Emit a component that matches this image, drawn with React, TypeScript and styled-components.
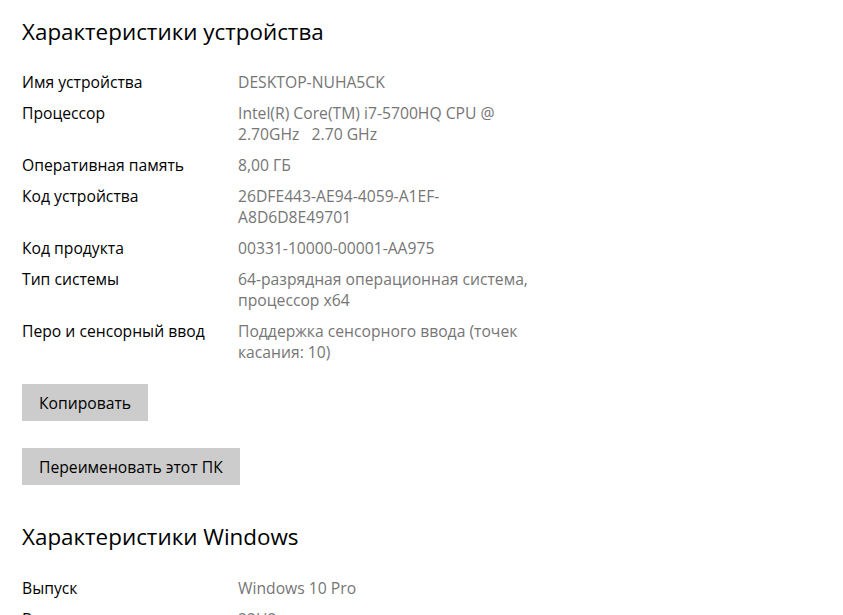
import React, { FC } from 'react'
import styled, { createGlobalStyle } from 'styled-components'

const GlobalStyle = createGlobalStyle`
  html, body {
    margin: 0;
    padding: 0;
    background: #ffffff;
  }
  body {
    font-family: 'Open Sans', 'Noto Sans', sans-serif;
    color: #000000;
  }
`

const Page = styled.div`
  width: 843px;
  height: 615px;
  overflow: hidden;
  box-sizing: border-box;
  padding: 17px 0 0 22px;
  display: flex;
  flex-direction: column;
`

const Heading = styled.h2<{ $gapBelow: number }>`
  margin: 0 0 ${({ $gapBelow }) => $gapBelow}px 0;
  font-size: 22.4px;
  font-weight: 400;
  line-height: 30px;
  color: #000000;
  white-space: nowrap;
`

const SpecList = styled.dl`
  margin: 0;
  display: flex;
  flex-direction: column;
  gap: 10px;
`

const SpecRow = styled.div`
  display: grid;
  grid-template-columns: 216px 300px;
  font-size: 15.7px;
  line-height: 21px;
`

const Label = styled.dt`
  margin: 0;
  color: #000000;
  white-space: nowrap;
`

const Value = styled.dd`
  margin: 0;
  color: #767676;
`

const Actions = styled.div`
  display: flex;
  flex-direction: column;
  align-items: flex-start;
  gap: 27px;
  margin: 21px 0 37px 0;
`

const Button = styled.button`
  height: 37px;
  padding: 0 17px;
  border: none;
  background: #cccccc;
  font-family: inherit;
  font-size: 15.7px;
  color: #000000;
  cursor: pointer;
`

type Spec = { label: string; value: React.ReactNode }

const deviceSpecs: Spec[] = [
  { label: 'Имя устройства', value: 'DESKTOP-NUHA5CK' },
  { label: 'Процессор', value: 'Intel(R) Core(TM) i7-5700HQ CPU @ 2.70GHz\u00a0\u00a0 2.70 GHz' },
  { label: 'Оперативная память', value: '8,00 ГБ' },
  { label: 'Код устройства', value: <>26DFE443-AE94-4059-A1EF-<br />A8D6D8E49701</> },
  { label: 'Код продукта', value: '00331-10000-00001-AA975' },
  { label: 'Тип системы', value: '64-разрядная операционная система, процессор x64' },
  { label: 'Перо и сенсорный ввод', value: 'Поддержка сенсорного ввода (точек касания: 10)' },
]

const windowsSpecs: Spec[] = [
  { label: 'Выпуск', value: 'Windows 10 Pro' },
  { label: 'Версия', value: '22H2' },
]

const Specs: FC<{ items: Spec[] }> = ({ items }) => (
  <SpecList>
    {items.map((s) => (
      <SpecRow key={s.label}>
        <Label>{s.label}</Label>
        <Value>{s.value}</Value>
      </SpecRow>
    ))}
  </SpecList>
)

const App: FC = () => (
  <>
    <GlobalStyle />
    <Page>
      <Heading $gapBelow={25}>Характеристики устройства</Heading>
      <Specs items={deviceSpecs} />
      <Actions>
        <Button>Копировать</Button>
        <Button>Переименовать этот ПК</Button>
      </Actions>
      <Heading $gapBelow={26}>Характеристики Windows</Heading>
      <Specs items={windowsSpecs} />
    </Page>
  </>
)

export default App
